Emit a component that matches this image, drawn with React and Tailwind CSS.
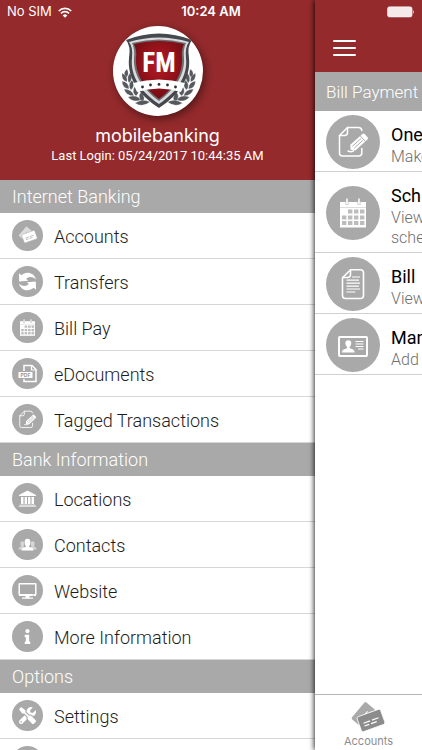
import { FaInfo, FaTools } from "react-icons/fa";

//ICONS

function WifiIcon() {
    return (
        <svg width="14" height="11" viewBox="0 0 14 11" fill="none" stroke="#fff" strokeWidth="1.7">
            <path d="M0.8 4 A8.6 8.6 0 0 1 13.2 4" />
            <path d="M3 6.3 A5.6 5.6 0 0 1 11 6.3" />
            <path d="M7 10.8 L4.7 8.4 A3.2 3.2 0 0 1 9.3 8.4 Z" fill="#fff" stroke="none" />
        </svg>
    );
}

function BatteryIcon() {
    return (
        <svg width="28" height="12" viewBox="0 0 28 12">
            <rect x="0.5" y="0.8" width="24.6" height="10.2" rx="2" fill="#fff" fillOpacity="0.9" stroke="#fff" strokeOpacity="0.5" />
            <path d="M26.2 4 Q27.8 5.9 26.2 7.8 Z" fill="#fff" />
        </svg>
    );
}

function Logo() {
    return (
        <svg width="90" height="90" viewBox="0 0 90 90" className="block">
            <defs>
                <radialGradient id="shield" cx="0.5" cy="0.4" r="0.6">
                    <stop offset="0" stopColor="#b81a24" />
                    <stop offset="1" stopColor="#740c13" />
                </radialGradient>
            </defs>
            {/* laurel leaves, right side is the mirror of the left */}
            {[null, "translate(91.5 0) scale(-1 1)"].map((flip, i) => (
                <g key={i} transform={flip || undefined} fill="#55585c" stroke="#fff" strokeWidth="0.3">
                    <path d="M14 43 Q9 47 13 52 Q17 48 14 43Z" />
                    <path d="M9 47 Q8 54 14 56 Q15 50 9 47Z" />
                    <path d="M17 47 Q13 52 16 57 Q21 52 17 47Z" />
                    <path d="M9 55 Q9 62 16 63 Q16 56 9 55Z" />
                    <path d="M19 54 Q14 59 18 64 Q23 59 19 54Z" />
                    <path d="M11 63 Q13 70 21 70 Q19 63 11 63Z" />
                    <path d="M22 60 Q18 66 23 70 Q28 66 22 60Z" />
                    <path d="M15 71 Q20 77 28 74 Q24 68 15 71Z" />
                    <path d="M28 66 Q24 71 29 76 Q34 73 28 66Z" />
                    <path d="M22 77 Q29 82 37 76 Q30 72 22 77Z" />
                </g>
            ))}
            <path d="M13 14 Q46 1 79 14 Q74 20 76 32 C78 52 66 69 46 82 C26 69 14 52 16 32 Q18 20 13 14Z" fill="#45484d" />
            <path d="M16 16 Q46 7 76 16 Q72 21 73 32 C75 50 64 66 46 78 C28 66 17 50 19 32 Q20 21 16 16Z" fill="#d8dadc" />
            <path d="M19 17 Q46 10 73 17 Q70 23 71 32 C72 49 62 63 46 75 C30 63 20 49 21 32 Q22 23 19 17Z" fill="#6b6d72" />
            <path d="M21 18 Q46 12 71 18 Q68 24 69 32 C70 48 61 62 46 73 C31 62 22 48 23 32 Q24 24 21 18Z" fill="url(#shield)" />
            <path d="M20 57 Q46 50 72 57 L68 66 Q46 59 24 66Z" fill="#fff" />
            <g fill="#2d2e31">
                <circle cx="29.500" cy="61" r="1.400" />
                <circle cx="37.500" cy="59" r="1.400" />
                <circle cx="46" cy="58.400" r="1.400" />
                <circle cx="54.500" cy="59" r="1.400" />
                <circle cx="62.500" cy="61" r="1.400" />
            </g>
            <text x="46" y="46" textAnchor="middle" fontSize="27" fontWeight="700" fill="#fff" fontFamily="'Roboto Condensed', 'Open Sans Condensed', 'Liberation Sans', sans-serif">FM</text>
        </svg>
    );
}

//two stacked bank cards, shared by the menu and the tab bar
function CardShapes({ front, back, line }) {
    return (
        <>
            <g transform="translate(12.500 13.500) rotate(-50)">
                <rect x="-11" y="-7" width="22" height="14" rx="1.500" fill={back} />
                <path d="M-4 1 H5 M-2 4 H7" stroke={line} strokeWidth="1" />
            </g>
            <g transform="translate(20 19.500) rotate(-20)">
                <rect x="-12.500" y="-8" width="25" height="16" rx="2" fill={front} stroke={line} strokeWidth="0.8" />
                <path d="M-8 0 H-1 M1 0 H8 M-8 3 H-3 M-1 3 H5" stroke={line} strokeWidth="1.200" />
            </g>
        </>
    );
}

function AccountsIcon() {
    return (
        <svg viewBox="0 0 31 31">
            <g transform="translate(6.500 6) scale(0.55)">
                <CardShapes front="#fff" back="#dcdcdc" line="#a9a9a9" />
            </g>
        </svg>
    );
}

function TransfersIcon() {
    return (
        <svg viewBox="0 0 31 31" fill="#fff">
            <path d="M7 7.200 L9.400 9.200 C13.500 5.200 21.500 5.500 24.200 13.500 C21.500 10.800 17 10 14.200 12.900 L16.200 14.800 L7.200 15.600Z" />
            <path d="M24 23.800 L21.600 21.800 C17.500 25.800 9.500 25.500 6.800 17.500 C9.500 20.200 14 21 16.800 18.100 L14.800 16.200 L23.800 15.400Z" />
        </svg>
    );
}

function CalendarIcon() {
    const cells = [
        [22, 23.5], [28, 23.5], [34, 23.5],
        [16, 29.5], [22, 29.5], [28, 29.5], [34, 29.5],
        [16, 35], [22, 35], [28, 35], [34, 35],
    ];
    return (
        <svg viewBox="0 0 54 54">
            <rect x="14" y="16" width="26" height="25.500" fill="#fff" />
            <path d="M14 21.500 H40" stroke="#c4c4c4" strokeWidth="0.6" />
            <path d="M21 15 V19 M33 15 V19" stroke="#c4c4c4" strokeWidth="3" />
            <path d="M21 12.500 V18.500 M33 12.500 V18.500" stroke="#fff" strokeWidth="1.500" />
            {cells.map(([x, y]) => (
                <rect key={`${x}-${y}`} x={x} y={y} width="4.400" height="4" fill="#bcbcbc" />
            ))}
        </svg>
    );
}

function PdfIcon() {
    return (
        <svg viewBox="0 0 31 31">
            <path d="M12 13 V7.500 H20 L24 11.500 V23.500 H12 V21" fill="none" stroke="#fff" strokeWidth="1.500" />
            <path d="M19.500 7.500 V12 H24" fill="none" stroke="#fff" strokeWidth="1.200" />
            <rect x="6.500" y="14" width="14" height="6" fill="#fff" />
            <text x="13.500" y="19" textAnchor="middle" fontSize="5" fontWeight="700" fill="#999" fontFamily="Inter, sans-serif">PDF</text>
        </svg>
    );
}

function EditIcon() {
    return (
        <svg viewBox="0 0 54 54" fill="none" stroke="#fff" strokeWidth="1.500" strokeLinecap="round" strokeLinejoin="round">
            <path d="M35.800 15.500 Q35.500 12.500 32.500 12.500 H21.500 L13.500 20.500 V38 Q13.500 41 16.500 41 H32.500 Q35.800 41 35.800 38 V33.500" />
            <path d="M21.500 12.500 V17.500 Q21.500 20.500 18.500 20.500 H13.500" />
            <g transform="translate(32 28) rotate(-42)">
                <path d="M-7 -3.800 H9 Q11 -3.800 11 -2 V2 Q11 3.800 9 3.800 H-7 L-10 0Z" fill="#fff" stroke="none" />
                <path d="M-6 -1.300 H5 M-6 1.300 H5 M6.500 -4 V4" stroke="#a9a9a9" strokeWidth="0.9" />
            </g>
            <path d="M22 36 Q25 37.500 27.500 35.800" />
        </svg>
    );
}

function DocumentIcon() {
    return (
        <svg viewBox="0 0 54 54" fill="none" stroke="#fff" strokeWidth="1.600" strokeLinejoin="round">
            <path d="M24.500 12.800 H34.500 Q37.500 12.800 37.500 15.800 V38.500 Q37.500 41.500 34.500 41.500 H19.500 Q16.500 41.500 16.500 38.500 V20.800Z" />
            <path d="M24.500 12.800 V17.500 Q24.500 20.500 21.500 20.500 H16.500" />
            <path d="M26 20 H34 M20.500 23.200 H33 M20.500 26.200 H34 M20.500 29.200 H33 M20.500 32 H34 M20.500 35 H29.500" strokeWidth="1.200" />
        </svg>
    );
}

function IdCardIcon() {
    return (
        <svg viewBox="0 0 54 54">
            <rect x="13" y="19" width="28" height="19" rx="0.800" fill="none" stroke="#fff" strokeWidth="2" />
            <path d="M16 34.500 Q16 31.500 19 31 L21 30.200 V29 Q19.300 27.500 19.300 25.200 Q19.300 22.300 22.300 22.300 Q25.300 22.300 25.300 25.200 Q25.300 27.500 23.700 29 V30.200 L26 31 Q28.600 31.500 28.600 34.500Z" fill="#fff" />
            <path d="M29.500 23.500 H37.500 M29.500 26 H37.500 M29.500 28.500 H37.500 M32 31 H37.500" stroke="#fff" strokeWidth="1.200" />
        </svg>
    );
}

function BankIcon() {
    return (
        <svg viewBox="0 0 31 31" fill="#fff">
            <path d="M15.500 7.500 L24 12 V13 H7 V12Z" />
            <path d="M9 14 H11.500 V21 H9Z M12.600 14 H15 V21 H12.600Z M16 14 H18.400 V21 H16Z M19.500 14 H22 V21 H19.500Z" />
            <path d="M8 21.500 H23 L24.500 24 H6.500Z" fill="#dcdcdc" />
        </svg>
    );
}

function ContactsIcon() {
    return (
        <svg viewBox="0 0 31 31">
            <g fill="#d6d6d6">
                <path d="M6.500 20.500 Q6.500 18 9.300 17.400 Q8.300 16 8.300 14.600 Q8.300 12.300 10.300 12.300 Q12.300 12.300 12.300 14.600 Q12.300 16 11.500 17.200 L13 20.500Z" />
                <path d="M24.500 20.500 Q24.500 18 21.700 17.400 Q22.700 16 22.700 14.600 Q22.700 12.300 20.700 12.300 Q18.700 12.300 18.700 14.600 Q18.700 16 19.500 17.200 L18 20.500Z" />
            </g>
            <path d="M9.500 21.500 Q9.500 18.800 12.800 18.300 L14.200 17.600 Q12.600 15.800 12.600 13.200 Q12.600 9.800 15.500 9.800 Q18.400 9.800 18.400 13.200 Q18.400 15.800 16.800 17.600 L18.200 18.300 Q21.500 18.800 21.500 21.500Z" fill="#fff" />
        </svg>
    );
}

function MonitorIcon() {
    return (
        <svg viewBox="0 0 31 31">
            <rect x="7.200" y="8.700" width="16.600" height="11" rx="0.600" fill="none" stroke="#fff" strokeWidth="1.500" />
            <path d="M7 19 H24 V21 H7Z M13.500 21 H17.500 V22.500 H13.500Z M10 22.500 H21 V23.800 H10Z" fill="#fff" />
            <path d="M20.500 20 H22" stroke="#a9a9a9" strokeWidth="0.700" />
        </svg>
    );
}

function InfoIcon() {
    return (
        <svg viewBox="0 0 31 31">
            <FaInfo x="8" y="8" size={15} color="#fff" />
        </svg>
    );
}

function SettingsIcon() {
    return (
        <svg viewBox="0 0 31 31">
            <FaTools x="7" y="7" size={17} color="#fff" />
        </svg>
    );
}

//MENU DATA

const sections = [
    {
        title: "Internet Banking",
        items: [
            { label: "Accounts", Icon: AccountsIcon },
            { label: "Transfers", Icon: TransfersIcon },
            { label: "Bill Pay", Icon: CalendarIcon },
            { label: "eDocuments", Icon: PdfIcon },
            { label: "Tagged Transactions", Icon: EditIcon },
        ],
    },
    {
        title: "Bank Information",
        items: [
            { label: "Locations", Icon: BankIcon },
            { label: "Contacts", Icon: ContactsIcon },
            { label: "Website", Icon: MonitorIcon },
            { label: "More Information", Icon: InfoIcon },
        ],
    },
    {
        title: "Options",
        items: [{ label: "Settings", Icon: SettingsIcon }],
    },
];

const payments = [
    { title: "One", lines: ["Make"], Icon: EditIcon },
    { title: "Sch", lines: ["View", "sche"], Icon: CalendarIcon },
    { title: "Bill", lines: ["View"], Icon: DocumentIcon },
    { title: "Man", lines: ["Add"], Icon: IdCardIcon },
];

function StatusBar() {
    return (
        <div className="absolute inset-x-0 top-0 z-20 grid grid-cols-3 items-center h-6 px-[7px] text-[13px] text-white font-[Inter,sans-serif]">
            <div className="flex items-center gap-[6px]">
                <span>No SIM</span>
                <WifiIcon />
            </div>
            <span className="text-center font-semibold">10:24 AM</span>
            <div className="flex justify-end">
                <BatteryIcon />
            </div>
        </div>
    );
}

function MenuSection({ title, items }) {
    return (
        <section>
            <h2 className="h-[33px] px-3 bg-[#a9a9a9] text-white text-[18px] leading-[34px] font-light">{title}</h2>
            <ul>
                {items.map(({ label, Icon }) => (
                    <li key={label} className="border-b border-[#d6d6d8]">
                        <a href="#" className="flex items-center gap-[11px] h-[45px] px-3">
                            <span className="size-[31px] shrink-0 rounded-full bg-[#a9a9a9]">
                                <Icon />
                            </span>
                            <span className="pt-[2px] text-[18px] font-light text-[#1c1c1c]">{label}</span>
                        </a>
                    </li>
                ))}
            </ul>
        </section>
    );
}

function Drawer() {
    return (
        <nav className="w-[315px] shrink-0 bg-white">
            <header className="flex flex-col items-center h-[180px] pt-[26px] bg-[#942a2c] text-white">
                <div className="rounded-full bg-white overflow-hidden shadow-[2px_3px_8px_rgba(0,0,0,0.45)]">
                    <Logo />
                </div>
                <p className="mt-2 text-[18px] leading-6 font-[Inter,sans-serif]">mobilebanking</p>
                <p className="text-[13px] leading-4">Last Login: 05/24/2017 10:44:35 AM</p>
            </header>
            {sections.map((s) => (
                <MenuSection key={s.title} title={s.title} items={s.items} />
            ))}
            {/* start of the next row, below the fold */}
            <div className="px-3 pt-[7px]">
                <div className="size-[31px] rounded-full bg-[#a9a9a9]" />
            </div>
        </nav>
    );
}

function PaymentRow({ title, lines, Icon }) {
    return (
        <li className="border-b border-[#d0d0d2]">
            <a href="#" className="flex items-center gap-[11px] pl-[11px] pt-1 pb-[2px]">
                <span className="size-[54px] shrink-0 rounded-full bg-[#a9a9a9]">
                    <Icon />
                </span>
                <span className="pt-2 pb-[2px] whitespace-nowrap">
                    <span className="block text-[18px] leading-6 text-black">{title}</span>
                    {lines.map((line) => (
                        <span key={line} className="block text-[16px] leading-5 font-light text-[#6f6f6f]">{line}</span>
                    ))}
                </span>
            </a>
        </li>
    );
}

function MainPage() {
    return (
        <main className="relative z-10 flex flex-col flex-1 min-w-0 bg-white shadow-[-1px_0_5px_rgba(0,0,0,0.8)]">
            <header className="h-[72px] pt-[35px] pl-3 bg-[#942a2c]">
                <button aria-label="Menu" className="flex flex-col gap-[5px] px-[6px] py-[5px]">
                    <span className="w-[23px] h-[2px] rounded bg-white" />
                    <span className="w-[23px] h-[2px] rounded bg-white" />
                    <span className="w-[23px] h-[2px] rounded bg-white" />
                </button>
            </header>
            <div className="flex flex-col flex-1 min-h-0 overflow-hidden">
                <h1 className="h-[39px] shrink-0 pl-[11px] bg-[#a9a9a9] text-white text-[17px] leading-[40px] font-light whitespace-nowrap">Bill Payment</h1>
                <ul>
                    {payments.map((p) => (
                        <PaymentRow key={p.title} {...p} />
                    ))}
                </ul>
            </div>
            <footer className="h-14 border-t border-[#b5b5b5]">
                <a href="#" className="flex flex-col items-center pt-[6px] text-[11px] leading-4 text-[#8e8e8e] font-[Inter,sans-serif]">
                    <svg width="36" height="32" viewBox="0 0 36 32">
                        <CardShapes front="#8c8c8c" back="#a9a9a9" line="#fff" />
                    </svg>
                    Accounts
                </a>
            </footer>
        </main>
    );
}

export default function App() {
    return (
        <div className="relative flex h-screen overflow-hidden font-[Roboto,'Liberation_Sans',sans-serif]">
            <StatusBar />
            <Drawer />
            <MainPage />
        </div>
    );
}
